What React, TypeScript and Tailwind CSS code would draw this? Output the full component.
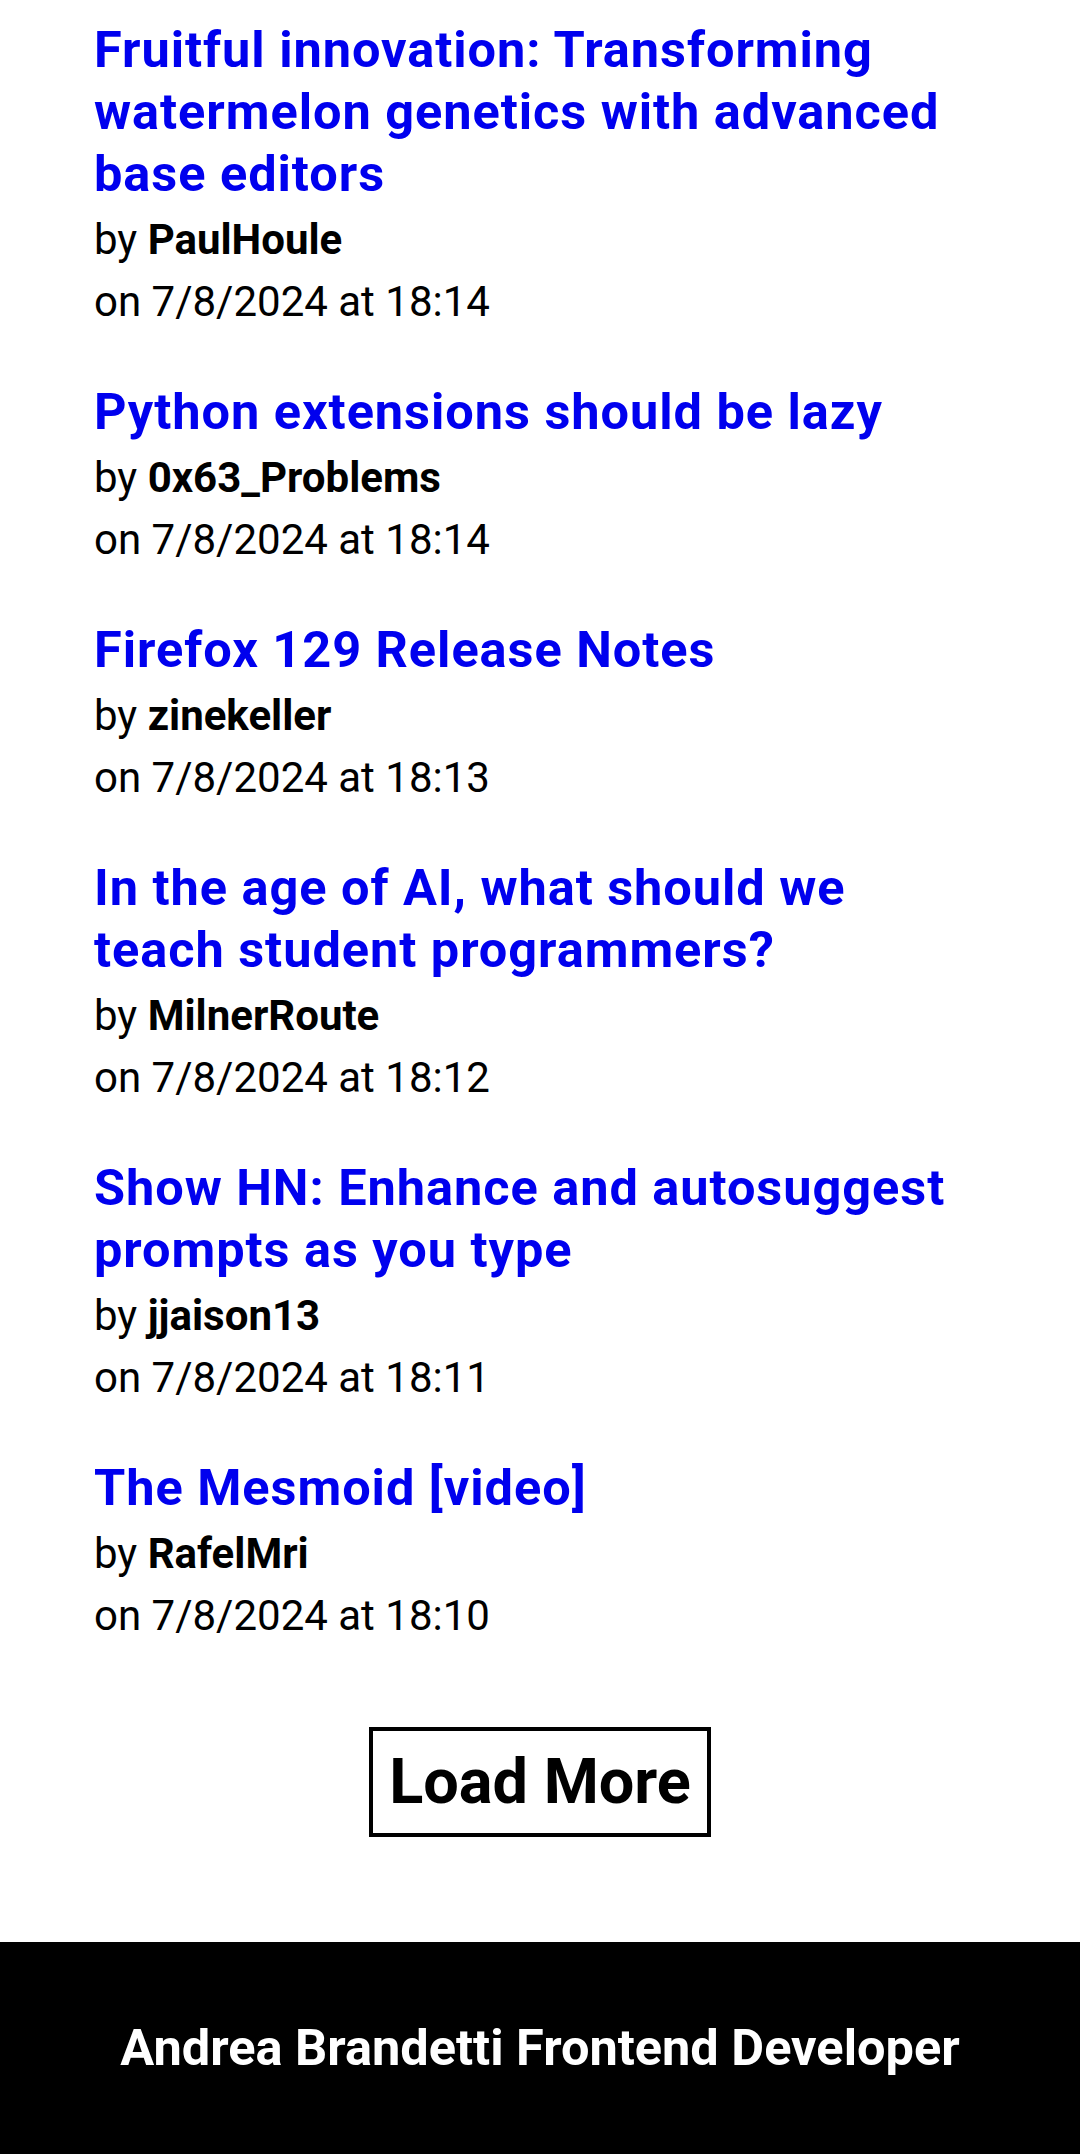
import React from 'react'

type Story = {
    title: string
    by: string
    time: string
}

const stories: Story[] = [
    { title: 'Fruitful innovation: Transforming watermelon genetics with advanced base editors', by: 'PaulHoule', time: '18:14' },
    { title: 'Python extensions should be lazy', by: '0x63_Problems', time: '18:14' },
    { title: 'Firefox 129 Release Notes', by: 'zinekeller', time: '18:13' },
    { title: 'In the age of AI, what should we teach student programmers?', by: 'MilnerRoute', time: '18:12' },
    { title: 'Show HN: Enhance and autosuggest prompts as you type', by: 'jjaison13', time: '18:11' },
    { title: 'The Mesmoid [video]', by: 'RafelMri', time: '18:10' },
]

function StoryItem({ story }: { story: Story }) {
    return (
        <li>
            {/* Title link */}
            <a href="#" className="block text-[50.5px] font-bold leading-[62px] tracking-[0.95px] text-[#0000ee]">
                {story.title}
            </a>
            <p className="mt-[4px] text-[42px] leading-[62px]">
                by <span className="font-bold">{story.by}</span>
            </p>
            <p className="text-[42px] leading-[62px]">on 7/8/2024 at {story.time}</p>
        </li>
    )
}

export default function App() {
    return (
        <div className="min-h-screen bg-white text-black font-['Roboto','Liberation_Sans',sans-serif]">
            <main className="pt-[19px] pl-[94px] pr-[112px]">
                <ul className="flex flex-col gap-[48px]">
                    {stories.map((s) => (
                        <StoryItem key={s.title} story={s} />
                    ))}
                </ul>
            </main>

            {/* Load more */}
            <div className="mt-[80px] flex justify-center">
                <button className="border-[4px] border-black bg-white px-[16px] py-[4px] text-[63px] font-bold leading-[94px] text-black">
                    Load More
                </button>
            </div>

            {/* Footer */}
            <footer className="mt-[105px] bg-black py-[75px] text-center">
                <h3 className="text-[50.5px] font-bold leading-[62px] text-white">
                    Andrea Brandetti Frontend Developer
                </h3>
            </footer>
        </div>
    )
}
